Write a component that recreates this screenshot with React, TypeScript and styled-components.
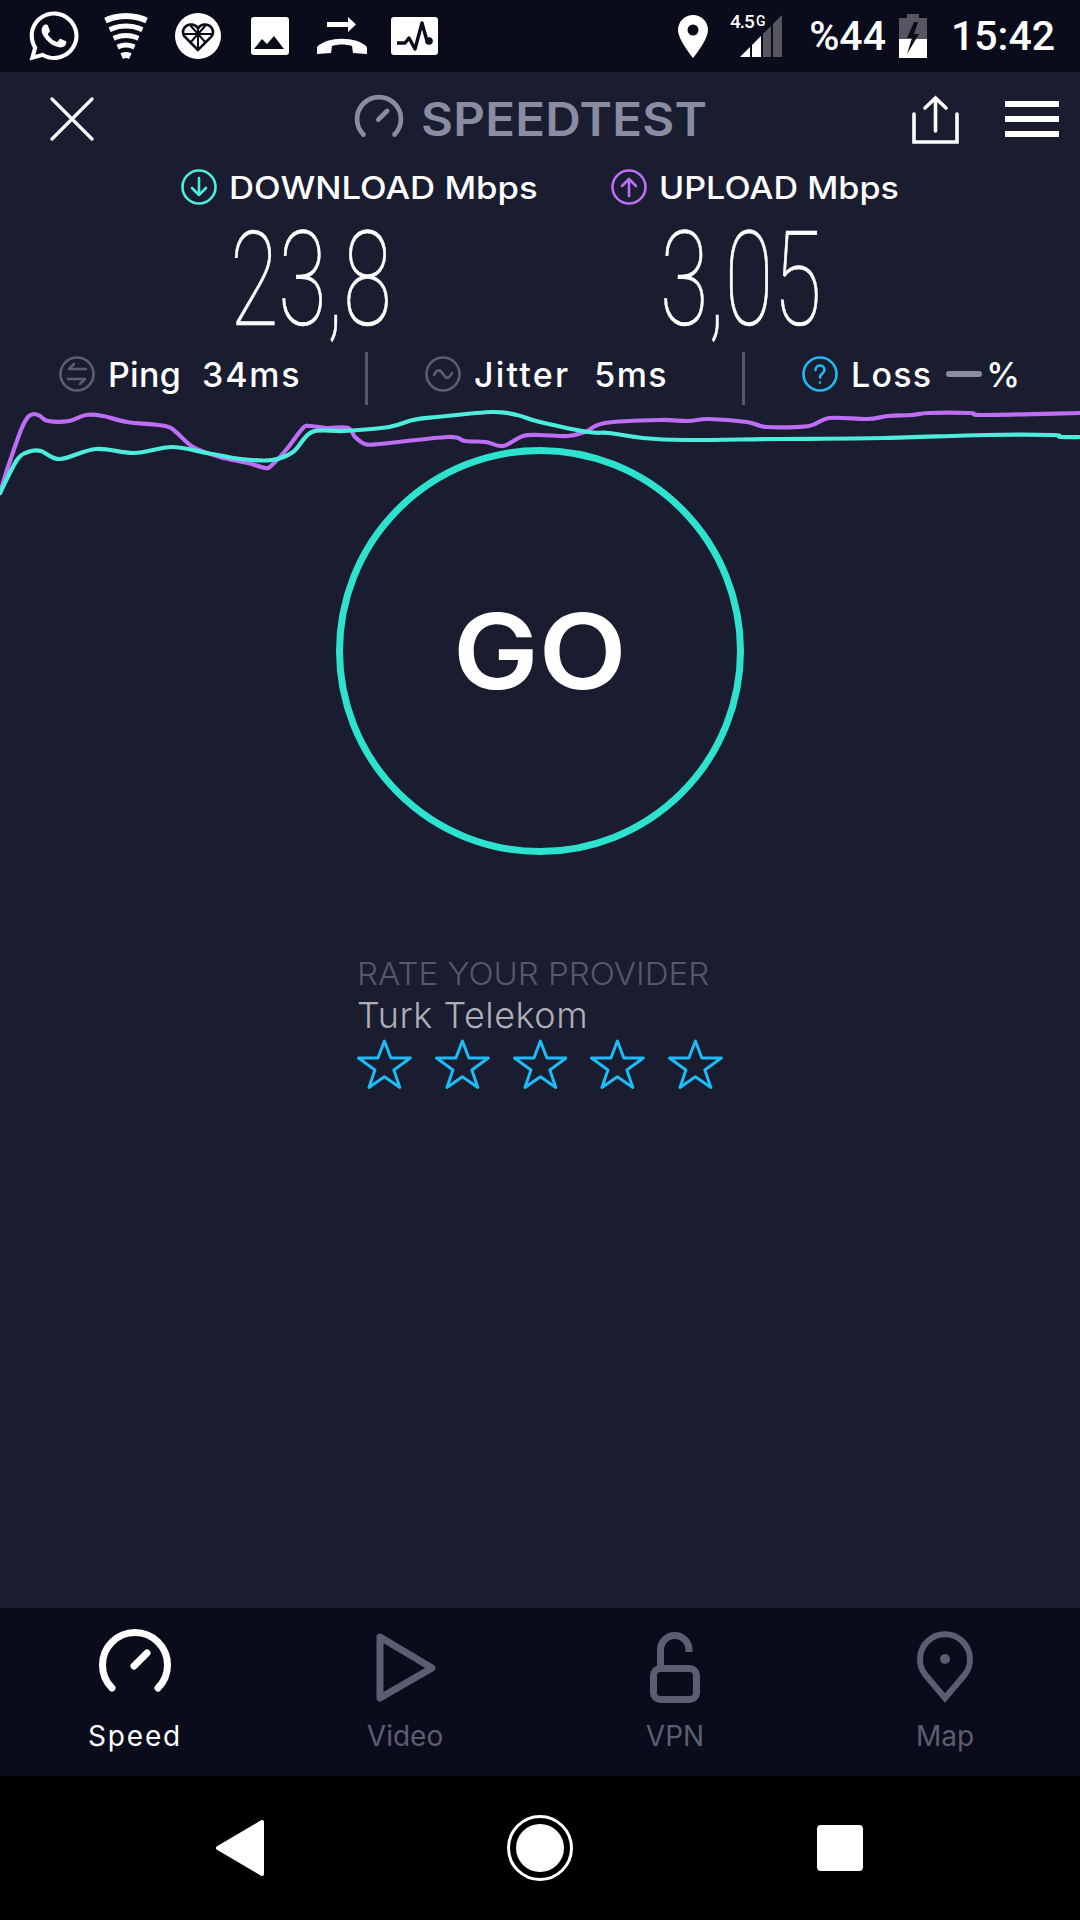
import React from "react"
import styled, { createGlobalStyle } from "styled-components"
import { FaWhatsapp } from "react-icons/fa"

const DARK = "#0a0c1c"
const BG = "#1a1c2f"
const TEAL = "#4ceddd"
const PURPLE = "#bd6ef5"
const MUTED = "#5c5e70"
const BLUE = "#1dbcf7"

const GlobalStyle = createGlobalStyle`
  html, body { margin: 0; padding: 0; background: ${BG}; }
  body { font-family: Inter, "Open Sans", sans-serif; color: #fff; }
  svg { display: block; }
`

const Page = styled.div`
  width: 1080px;
  height: 1920px;
  display: flex;
  flex-direction: column;
  overflow: hidden;
  background: ${BG};
`

// the app's geometric face is wider than anything installed
const Wide = styled.span<{ $x: number; $origin?: string }>`
  display: inline-block;
  transform: scaleX(${(p) => p.$x});
  transform-origin: ${(p) => p.$origin || "left"} center;
`

const StatusBar = styled.div`
  height: 72px;
  flex: none;
  display: flex;
  align-items: center;
  padding-left: 18px;
  background: ${DARK};
`

const StatusSlot = styled.div`
  width: 72px;
  display: flex;
  justify-content: center;
`

const StatusRight = styled.div`
  margin-left: auto;
  display: flex;
  align-items: center;
  padding-right: 25px;
`

const StatusText = styled.span<{ $left: number }>`
  margin-left: ${(p) => p.$left}px;
  font-family: Roboto, sans-serif;
  font-size: 41px;
  font-weight: 500;
  line-height: 72px;
  color: #fff;
`

const StatusGlyph = styled.div<{ $left: number }>`
  margin-left: ${(p) => p.$left}px;
`

const Header = styled.div`
  height: 94px;
  flex: none;
  display: flex;
  align-items: center;
  padding: 0 21px 0 50px;
`

const Title = styled.div`
  margin-left: 258px;
  display: flex;
  align-items: center;
  gap: 15px;
  font-size: 46px;
  font-weight: 600;
  letter-spacing: 0.2px;
  color: #8a8ca2;
`

const HeaderActions = styled.div`
  margin-left: auto;
  display: flex;
  align-items: center;
  gap: 46px;
`

const Menu = styled.div`
  width: 54px;
  display: flex;
  flex-direction: column;
  gap: 9px;
`

const MenuBar = styled.span`
  display: block;
  height: 6px;
  background: #fff;
`

const SpeedRow = styled.div`
  display: flex;
  padding-left: 181px;
  flex: none;
`

const SpeedColumn = styled.div<{ $width: number }>`
  width: ${(p) => p.$width}px;
`

const SpeedLabel = styled.div`
  height: 42px;
  display: flex;
  align-items: center;
  gap: 12px;
  font-size: 31px;
  font-weight: 500;
  white-space: nowrap;
`

const SpeedValue = styled.div`
  height: 144px;
  padding-left: 73px;
  font-family: Roboto, sans-serif;
  font-size: 132px;
  font-weight: 100;
  line-height: 144px;
  -webkit-text-stroke: 0.7px #fff;
  transform: scaleX(0.67);
  transform-origin: left center;
  white-space: nowrap;
`

const StatsRow = styled.div`
  height: 53px;
  flex: none;
  display: flex;
  align-items: center;
`

const StatCell = styled.div<{ $width: number; $left: number }>`
  width: ${(p) => p.$width}px;
  padding: 0 0 9px ${(p) => p.$left}px;
  box-sizing: border-box;
  display: flex;
  align-items: center;
  font-size: 34px;
  font-weight: 500;
  white-space: nowrap;
`

const StatName = styled.span<{ $spacing: number }>`
  margin-left: 13px;
  letter-spacing: ${(p) => p.$spacing}px;
`

const StatValue = styled.span<{ $left: number; $spacing: number }>`
  margin-left: ${(p) => p.$left}px;
  letter-spacing: ${(p) => p.$spacing}px;
`

const StatDivider = styled.div`
  width: 3px;
  height: 53px;
  background: #55576a;
`

const LossDash = styled.span`
  width: 36px;
  height: 6px;
  margin: 0 4px 0 14px;
  border-radius: 3px;
  background: #8c8ea0;
`

const Chart = styled.svg`
  flex: none;
`

const GoButton = styled.div`
  flex: none;
  width: 408px;
  height: 408px;
  margin: -53px auto 0;
  box-sizing: border-box;
  border: 7px solid #2de2cf;
  border-radius: 50%;
  display: flex;
  align-items: center;
  justify-content: center;
  font-size: 104px;
  font-weight: 600;
`

const Rate = styled.div`
  flex: none;
  width: 366px;
  margin: 100px auto 0;
`

const RateTitle = styled.div`
  font-size: 31px;
  font-weight: 300;
  line-height: 38px;
  color: #565869;
  white-space: nowrap;
`

const Provider = styled.div`
  font-size: 36px;
  font-weight: 300;
  letter-spacing: 0.5px;
  line-height: 44px;
  color: #aeaeb8;
  white-space: nowrap;
`

const Stars = styled.div`
  display: flex;
  gap: 23px;
  margin-top: 2px;
`

const Spacer = styled.div`
  flex: 1;
`

const TabBar = styled.div`
  height: 168px;
  flex: none;
  display: grid;
  grid-template-columns: repeat(4, 270px);
  background: ${DARK};
`

const Tab = styled.div<{ $active?: boolean }>`
  padding-top: 17px;
  display: flex;
  flex-direction: column;
  align-items: center;
  color: ${(p) => (p.$active ? "#fff" : MUTED)};
  letter-spacing: ${(p) => (p.$active ? "1.8px" : "0")};
`

const TabLabel = styled.span`
  margin-top: 15px;
  font-size: 28px;
  font-weight: 400;
  line-height: 32px;
`

const NavBar = styled.div`
  height: 144px;
  flex: none;
  display: grid;
  grid-template-columns: repeat(3, 300px);
  padding: 0 90px;
  background: #000;
`

const NavButton = styled.div`
  display: flex;
  align-items: center;
  justify-content: center;
`

const NavSquare = styled.div`
  width: 46px;
  height: 46px;
  border-radius: 4px;
  background: #fff;
`

const NavHome = styled.div`
  width: 66px;
  height: 66px;
  box-sizing: border-box;
  border: 3px solid #fff;
  border-radius: 50%;
  display: flex;
  align-items: center;
  justify-content: center;
`

const NavHomeDot = styled.div`
  width: 48px;
  height: 48px;
  border-radius: 50%;
  background: #fff;
`

type Point = [number, number]

const purpleLine: Point[] = [
  [0, 493], [7, 470], [21, 430], [28, 417], [34, 414], [40, 416], [48, 421], [69, 421], [86, 415],
  [103, 416], [127, 422], [165, 426], [176, 432], [193, 447], [220, 457], [248, 463], [265, 468],
  [272, 465], [286, 450], [303, 428], [310, 426], [327, 428], [348, 428], [355, 437], [365, 444],
  [379, 444], [448, 437], [465, 441], [486, 442], [503, 446], [523, 436], [540, 435], [568, 436],
  [585, 432], [605, 423], [660, 420], [688, 421], [709, 419], [747, 422], [767, 427], [809, 426],
  [829, 418], [867, 419], [888, 416], [912, 415], [929, 413], [970, 413], [984, 415], [1080, 413],
]

const tealLine: Point[] = [
  [0, 493], [17, 460], [28, 452], [41, 451], [60, 459], [96, 449], [134, 453], [172, 447], [207, 453],
  [241, 459], [272, 460], [293, 452], [312, 432], [344, 431], [389, 427], [413, 420], [437, 417],
  [492, 412], [517, 415], [540, 422], [588, 432], [609, 433], [643, 438], [685, 440], [778, 439],
  [884, 438], [984, 435], [1053, 435], [1060, 437], [1080, 437],
]

// catmull-rom through the sampled points so the lines stay soft
const smooth = (pts: Point[]) => {
  let d = `M${pts[0][0]} ${pts[0][1]}`
  for (let i = 0; i < pts.length - 1; i++) {
    const p0 = pts[Math.max(i - 1, 0)]
    const p1 = pts[i]
    const p2 = pts[i + 1]
    const p3 = pts[Math.min(i + 2, pts.length - 1)]
    const c1x = p1[0] + (p2[0] - p0[0]) / 6
    const c1y = p1[1] + (p2[1] - p0[1]) / 6
    const c2x = p2[0] - (p3[0] - p1[0]) / 6
    const c2y = p2[1] - (p3[1] - p1[1]) / 6
    d += ` C${c1x.toFixed(1)} ${c1y.toFixed(1)} ${c2x.toFixed(1)} ${c2y.toFixed(1)} ${p2[0]} ${p2[1]}`
  }
  return d
}

const Gauge = ({ size, color }: { size: number; color: string }) => (
  <svg width={size} height={size} viewBox="0 0 80 80" fill="none" stroke={color} strokeWidth="7" strokeLinecap="round">
    <path d="M17 63A32.5 32.5 0 1 1 63 63" />
    <path d="M39 41L52 28" />
  </svg>
)

const CircleIcon = ({ color, children }: { color: string; children: React.ReactNode }) => (
  <svg width="36" height="36" viewBox="0 0 36 36" fill="none" stroke={color} strokeWidth="2.6" strokeLinecap="round" strokeLinejoin="round">
    <circle cx="18" cy="18" r="16.5" />
    {children}
  </svg>
)

const Star = () => (
  <svg width="55" height="50" viewBox="0 0 55 50" fill="none" stroke={BLUE} strokeWidth="3" strokeLinejoin="round">
    <path d="M27.5 2L34 19H53.5L37 31L43 48.5L27.5 37.7L12 48.5L18 31L1.5 19H21Z" />
  </svg>
)

const App = () => (
  <Page>
    <GlobalStyle />
    <StatusBar>
      <StatusSlot>
        <FaWhatsapp size={56} color="#fff" />
      </StatusSlot>
      <StatusSlot>
        <svg width="48" height="46" viewBox="0 0 48 46" fill="none" stroke="#fff">
          <clipPath id="wifi-wedge">
            <polygon points="0,0 48,0 27,46 21,46" />
          </clipPath>
          <g clipPath="url(#wifi-wedge)">
            <circle cx="24" cy="50" r="47" strokeWidth="6" />
            <circle cx="24" cy="50" r="37" strokeWidth="5" />
            <circle cx="24" cy="50" r="27.5" strokeWidth="5" />
            <circle cx="24" cy="50" r="18" strokeWidth="5" />
            <circle cx="24" cy="50" r="8" strokeWidth="6" />
          </g>
        </svg>
      </StatusSlot>
      <StatusSlot>
        <svg width="46" height="46" viewBox="0 0 46 46" fill="none" stroke={DARK} strokeWidth="2">
          <circle cx="23" cy="23" r="23" fill="#fff" stroke="none" />
          <path d="M23 37L9.5 23.5C5.5 17.5 10.5 11 17 11.5C20 11.8 22 13.5 23 15.5C24 13.5 26 11.8 29 11.5C35.5 11 40.5 17.5 36.5 23.5Z" strokeWidth="2.6" />
          <path d="M8 21H38M23 15.5V37M15 12L31 30M31 12L15 30" />
        </svg>
      </StatusSlot>
      <StatusSlot>
        <svg width="38" height="38" viewBox="0 0 38 38">
          <rect width="38" height="38" rx="3" fill="#fff" />
          <path d="M3 32L11 22L16 27L23 19L33 32Z" fill={DARK} />
        </svg>
      </StatusSlot>
      <StatusSlot>
        <svg width="50" height="38" viewBox="0 0 50 38" fill="#fff">
          <path d="M10 5H31V0L39 7.5L31 15V10H10Z" />
          <path d="M0 37V30C10 19 40 19 50 30V37L36 36L35 29C28 27 22 27 15 29L14 36Z" />
        </svg>
      </StatusSlot>
      <StatusSlot>
        <svg width="47" height="38" viewBox="0 0 47 38" fill="none">
          <rect width="47" height="38" rx="3" fill="#fff" />
          <path d="M6 26H14L18 21L24 32L31 6L36 24" stroke={DARK} strokeWidth="3.4" strokeLinejoin="round" />
          <circle cx="38" cy="24" r="3.8" fill={DARK} />
        </svg>
      </StatusSlot>
      <StatusRight>
        <svg width="30" height="43" viewBox="0 0 30 43">
          <path d="M15 0C6.7 0 0 6.7 0 15C0 25 15 43 15 43S30 25 30 15C30 6.7 23.3 0 15 0Z" fill="#fff" />
          <circle cx="15" cy="15" r="5.5" fill={DARK} />
        </svg>
        <StatusGlyph $left={20}>
          <svg width="56" height="60" viewBox="0 -6 56 60">
            <path d="M12 45H22V35Z" fill="#fff" />
            <path d="M24 45V33L33 24V45Z" fill="#fff" />
            <path d="M35 45V22L43 14V45Z" fill="#55565f" />
            <path d="M45 45V12L54 3V45Z" fill="#55565f" />
            <text x="2" y="16" fill="#fff" fontFamily="Roboto, sans-serif" fontSize="19" fontWeight="500" letterSpacing="-1">4.5</text>
            <text x="28" y="14" fill="#fff" fontFamily="Roboto, sans-serif" fontSize="14" fontWeight="500">G</text>
          </svg>
        </StatusGlyph>
        <StatusText $left={25}>%44</StatusText>
        <StatusGlyph $left={13}>
          <svg width="28" height="44" viewBox="0 0 28 44">
            <path d="M8 0H20V4H28V44H0V4H8Z" fill="#55565f" />
            <path d="M0 25H28V44H0Z" fill="#fff" />
            <path d="M15 8L8 24H13L8 40L20 20H15L19 8Z" fill={DARK} />
          </svg>
        </StatusGlyph>
        <StatusText $left={24}>15:42</StatusText>
      </StatusRight>
    </StatusBar>

    <Header>
      <svg width="44" height="44" viewBox="0 0 44 44" stroke="#fff" strokeWidth="3.2" strokeLinecap="round">
        <path d="M2 2L42 42M42 2L2 42" />
      </svg>
      <Title>
        <Gauge size={54} color="#8a8ca2" />
        <Wide $x={1.07}>SPEEDTEST</Wide>
      </Title>
      <HeaderActions>
        <svg width="47" height="49" viewBox="0 0 47 49" fill="none" stroke="#fff" strokeWidth="3.6" strokeLinecap="round">
          <path d="M2 19V47H45V19" />
          <path d="M23.5 36V3M13 13L23.5 3L34 13" />
        </svg>
        <Menu>
          <MenuBar />
          <MenuBar />
          <MenuBar />
        </Menu>
      </HeaderActions>
    </Header>

    <SpeedRow>
      <SpeedColumn $width={430}>
        <SpeedLabel>
          <CircleIcon color={TEAL}>
            <path d="M18 9V26M11 19L18 26L25 19" />
          </CircleIcon>
          <Wide $x={1.12}>DOWNLOAD Mbps</Wide>
        </SpeedLabel>
        <SpeedValue>23,8</SpeedValue>
      </SpeedColumn>
      <SpeedColumn $width={469}>
        <SpeedLabel>
          <CircleIcon color={PURPLE}>
            <path d="M18 27V10M11 17L18 10L25 17" />
          </CircleIcon>
          <Wide $x={1.1}>UPLOAD Mbps</Wide>
        </SpeedLabel>
        <SpeedValue>3,05</SpeedValue>
      </SpeedColumn>
    </SpeedRow>

    <StatsRow>
      <StatCell $width={365} $left={59}>
        <CircleIcon color={MUTED}>
          <path d="M27 13H10L15 8M9 23H26L21 28" />
        </CircleIcon>
        <StatName $spacing={0.3}>Ping</StatName>
        <StatValue $left={21} $spacing={1.8}>34ms</StatValue>
      </StatCell>
      <StatDivider />
      <StatCell $width={374} $left={57}>
        <CircleIcon color={MUTED}>
          <path d="M9 19C12 13 15 13 18 18C21 23 24 23 27 17" />
        </CircleIcon>
        <StatName $spacing={2.2}>Jitter</StatName>
        <StatValue $left={24} $spacing={1.3}>5ms</StatValue>
      </StatCell>
      <StatDivider />
      <StatCell $width={335} $left={57}>
        <CircleIcon color={BLUE}>
          <path d="M13.5 14C13.5 8 22.5 8 22.5 14C22.5 17.5 18 17.5 18 21.5M18 26.5V26.6" />
        </CircleIcon>
        <StatName $spacing={1.2}>Loss</StatName>
        <LossDash />
        %
      </StatCell>
    </StatsRow>

    <Chart width="1080" height="95" viewBox="0 405 1080 95" fill="none" strokeWidth="4.2" strokeLinecap="round">
      <path d={smooth(purpleLine)} stroke={PURPLE} />
      <path d={smooth(tealLine)} stroke={TEAL} />
    </Chart>

    <GoButton>
      <Wide $x={1.1} $origin="center">GO</Wide>
    </GoButton>

    <Rate>
      <RateTitle>
        <Wide $x={1.067}>RATE YOUR PROVIDER</Wide>
      </RateTitle>
      <Provider>Turk Telekom</Provider>
      <Stars>
        <Star />
        <Star />
        <Star />
        <Star />
        <Star />
      </Stars>
    </Rate>

    <Spacer />

    <TabBar>
      <Tab $active>
        <Gauge size={80} color="#fff" />
        <TabLabel>Speed</TabLabel>
      </Tab>
      <Tab>
        <svg width="80" height="80" viewBox="0 0 80 80" fill="none" stroke={MUTED} strokeWidth="7" strokeLinejoin="round">
          <path d="M15 12L67 43L15 73Z" />
        </svg>
        <TabLabel>Video</TabLabel>
      </Tab>
      <Tab>
        <svg width="80" height="80" viewBox="0 0 80 80" fill="none" stroke={MUTED} strokeWidth="7">
          <rect x="18.5" y="43.5" width="43" height="31" rx="7" />
          <path d="M25.5 43V24.75A14.25 14.25 0 0 1 54 24.75V27" />
        </svg>
        <TabLabel>VPN</TabLabel>
      </Tab>
      <Tab>
        <svg width="80" height="80" viewBox="0 0 80 80" fill="none" stroke={MUTED} strokeWidth="6">
          <path d="M40 73L20.5 50A25 25 0 1 1 59.5 50Z" />
          <circle cx="40" cy="34" r="5" fill={MUTED} stroke="none" />
        </svg>
        <TabLabel>Map</TabLabel>
      </Tab>
    </TabBar>

    <NavBar>
      <NavButton>
        <svg width="48" height="56" viewBox="0 0 48 56" fill="#fff" stroke="#fff" strokeWidth="4" strokeLinejoin="round">
          <path d="M46 2V54L2 28Z" />
        </svg>
      </NavButton>
      <NavButton>
        <NavHome>
          <NavHomeDot />
        </NavHome>
      </NavButton>
      <NavButton>
        <NavSquare />
      </NavButton>
    </NavBar>
  </Page>
)

export default App
